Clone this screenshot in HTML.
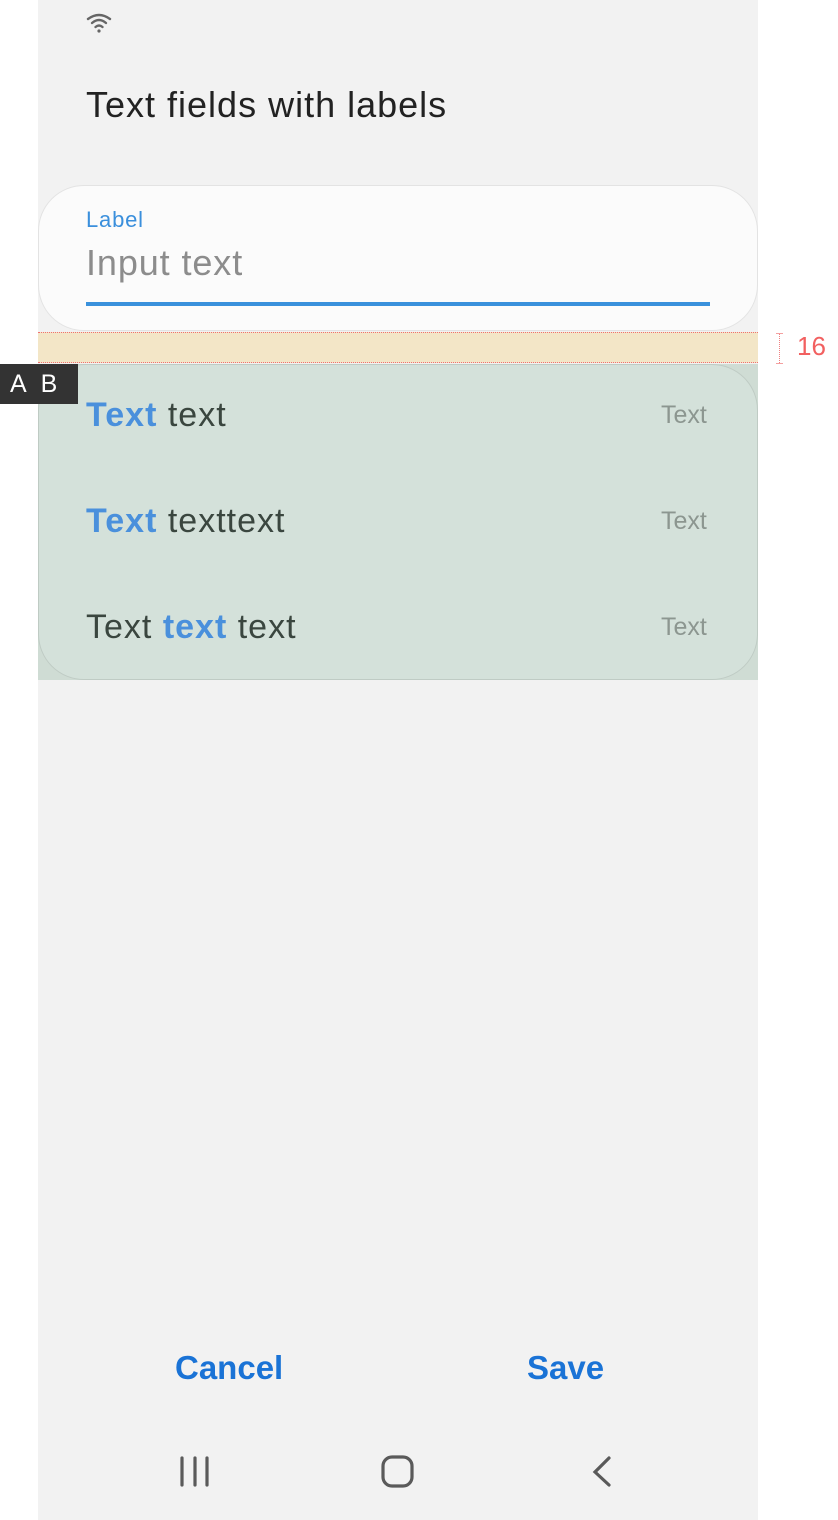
<!DOCTYPE html>
<html><head><meta charset="utf-8"><style>
*{margin:0;padding:0;box-sizing:border-box}
body{width:838px;height:1520px;background:#fff;font-family:"Liberation Sans",sans-serif;position:relative;overflow:hidden}
.screen{position:absolute;left:38px;top:0;width:720px;height:1520px;background:#f2f2f2}
.abs{position:absolute}
</style></head><body>
<div class="screen"></div>
<svg class="abs" style="left:86px;top:12px" width="26" height="22" viewBox="0 0 26 22">
<path d="M2 7 Q13 -1 24 7" stroke="#666" stroke-width="2.4" fill="none" stroke-linecap="round"/>
<path d="M6 11 Q13 5 20 11" stroke="#666" stroke-width="2.4" fill="none" stroke-linecap="round"/>
<path d="M9.5 15 Q13 12 16.5 15" stroke="#666" stroke-width="2.4" fill="none" stroke-linecap="round"/>
<circle cx="13" cy="19" r="1.6" fill="#666"/></svg>
<div class="abs" style="left:86px;top:84px;font-size:36px;color:#222;letter-spacing:1px">Text fields with labels</div>
<div class="abs" style="left:38px;top:185px;width:720px;height:146px;background:#fbfbfb;border:1px solid #e3e3e3;border-radius:46px"></div>
<div class="abs" style="left:86px;top:207px;font-size:22px;color:#3a8fdc;letter-spacing:0.8px">Label</div>
<div class="abs" style="left:86px;top:242px;font-size:36px;color:#8c8c8c;letter-spacing:0.9px">Input text</div>
<div class="abs" style="left:86px;top:302px;width:624px;height:4px;background:#3a91dc"></div>
<div class="abs" style="left:38px;top:332px;width:720px;height:31px;background:#f3e6c7;border-top:1px dotted #f07070;border-bottom:1px dotted #f07070"></div>
<div class="abs" style="left:776px;top:333px;width:7px;height:31px;border-top:1px solid #f4a0a0;border-bottom:1px solid #f4a0a0"></div>
<div class="abs" style="left:779px;top:334px;width:1px;height:29px;border-left:1px dotted #f08080"></div>
<div class="abs" style="left:797px;top:331px;font-size:26px;color:#f26060">16</div>
<div class="abs" style="left:38px;top:364px;width:720px;height:316px;background:#cfdcd4"></div>
<div class="abs" style="left:38px;top:364px;width:720px;height:316px;background:#d4e1da;border:1px solid #bfcbc4;border-radius:46px"></div>
<div class="abs" style="left:0;top:364px;width:78px;height:40px;background:#333;color:#fff;font-size:25px;line-height:40px;padding-left:10px">A&nbsp;&nbsp;B</div>
<div class="abs" style="left:86px;top:396px;font-size:34px;color:#3a463f;letter-spacing:1px"><b style="color:#4a90dc">Text</b> text</div>
<div class="abs" style="left:86px;top:502px;font-size:34px;color:#3a463f;letter-spacing:1px"><b style="color:#4a90dc">Text</b> texttext</div>
<div class="abs" style="left:86px;top:608px;font-size:34px;color:#3a463f;letter-spacing:1px">Text <b style="color:#4a90dc">text</b> text</div>
<div class="abs" style="left:661px;top:401px;font-size:25px;color:#8c9690">Text</div>
<div class="abs" style="left:661px;top:507px;font-size:25px;color:#8c9690">Text</div>
<div class="abs" style="left:661px;top:613px;font-size:25px;color:#8c9690">Text</div>
<div class="abs" style="left:175px;top:1349px;font-size:33px;font-weight:bold;color:#1a73d6">Cancel</div>
<div class="abs" style="left:527px;top:1349px;font-size:33px;font-weight:bold;color:#1a73d6">Save</div>
<svg class="abs" style="left:150px;top:1440px" width="480" height="70" viewBox="0 0 480 70">
<g stroke="#5a5a5a" stroke-width="3.2" stroke-linecap="round" fill="none">
<path d="M32 18V45M45 18V45M57 18V45"/>
<rect x="233" y="17" width="29" height="29" rx="9"/>
<path d="M459 18L445 32L459 45"/></g></svg>
</body></html>
